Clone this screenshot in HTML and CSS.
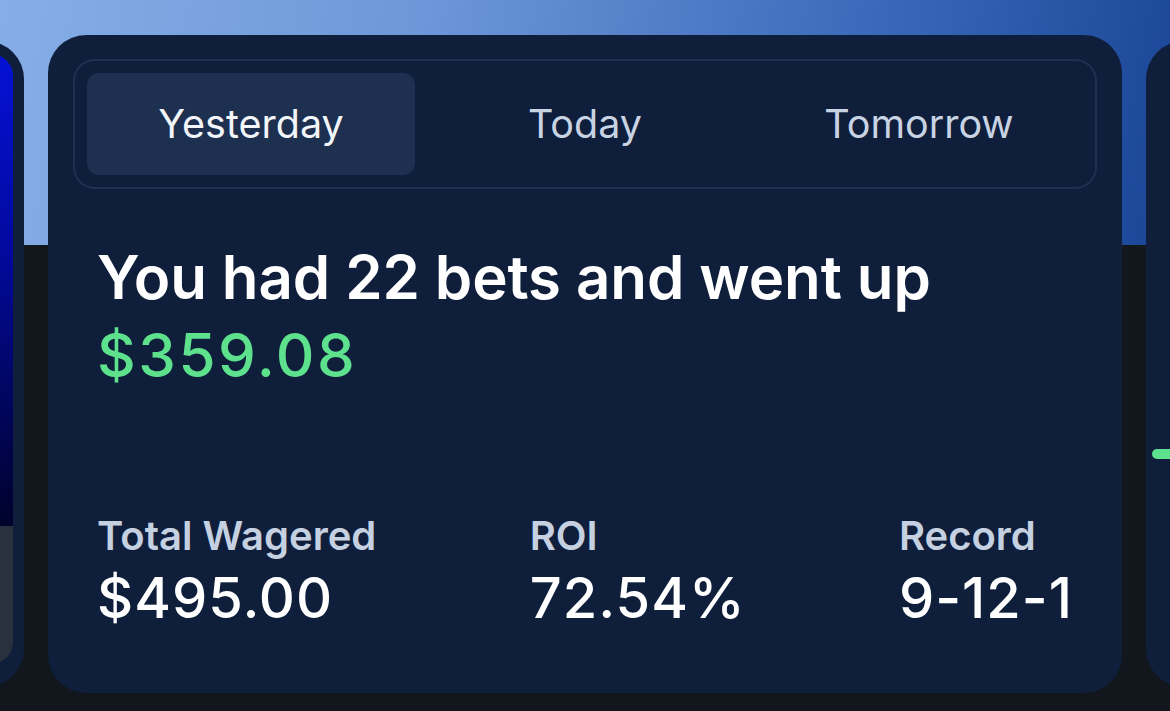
FILE: index.html
```html
<!DOCTYPE html>
<html lang="en">
<head>
  <meta charset="UTF-8">
  <meta name="viewport" content="width=device-width, initial-scale=1.0">
  <title>Daily Recap</title>
  <link rel="stylesheet" href="styles.css">
</head>
<body>
  <div class="carousel">
    <div class="card side-card">
      <div class="preview">
        <div class="preview-art"></div>
        <div class="preview-footer"></div>
      </div>
    </div>

    <div class="card recap-card">
      <div class="tabs">
        <button class="tab active">Yesterday</button>
        <button class="tab">Today</button>
        <button class="tab">Tomorrow</button>
      </div>

      <div class="summary">
        <h1 class="headline">You had 22 bets and went up <span class="profit">$359.08</span></h1>

        <div class="stats">
          <div class="stat">
            <div class="stat-label">Total Wagered</div>
            <div class="stat-value">$495.00</div>
          </div>
          <div class="stat">
            <div class="stat-label">ROI</div>
            <div class="stat-value">72.54%</div>
          </div>
          <div class="stat">
            <div class="stat-label">Record</div>
            <div class="stat-value">9-12-1</div>
          </div>
        </div>
      </div>
    </div>

    <div class="card side-card">
      <div class="chart-line"></div>
    </div>
  </div>
</body>
</html>
```

FILE: styles.css
```css
body {
  font-family: Inter, "Noto Sans", sans-serif;
  margin: 0;
  padding: 0;
  height: 711px;
  overflow: hidden;
  background:
    linear-gradient(100deg, #86aee6 0%, #6d97d8 35%, #3e6cbc 70%, #1a4596 100%) top / 100% 245px no-repeat,
    #12161d;
  color: #fff;
}

.carousel {
  display: flex;
  justify-content: center;
  align-items: center;
  gap: 24px;
  padding-top: 35px;
  height: 658px;
}

.card {
  flex-shrink: 0;
  width: 1074px;
  background-color: #0f1f3b;
  border-radius: 38px;
  box-sizing: border-box;
}

.side-card {
  height: 646px;
  display: flex;
  flex-direction: column;
}

/* left neighbour: only its right edge shows */
.preview {
  flex: 1;
  margin: 13px 11px 23px 13px;
  border-radius: 22px;
  overflow: hidden;
  display: flex;
  flex-direction: column;
}

.preview-art {
  flex: 1;
  background: linear-gradient(180deg, #0512d6 0%, #0209a0 40%, #00022a 100%);
}

.preview-footer {
  height: 138px;
  background-color: #29313e;
}

/* right neighbour: start of a chart line */
.chart-line {
  margin: 408px 0 0 6px;
  width: 200px;
  height: 10px;
  border-radius: 5px;
  background-color: #5ee18c;
}

.recap-card {
  height: 658px;
  padding: 24px 25px 0;
  display: flex;
  flex-direction: column;
}

.tabs {
  display: flex;
  gap: 6px;
  padding: 12px;
  border: 2px solid #1f3050;
  border-radius: 22px;
}

.tab {
  flex: 1;
  height: 102px;
  border: none;
  border-radius: 12px;
  background: transparent;
  color: #c8d3e3;
  font-family: inherit;
  font-size: 39.5px;
  font-weight: 400;
  padding: 0;
  cursor: pointer;
}

.tab.active {
  background-color: #1e3050;
  color: #f2f5f9;
}

.summary {
  flex: 1;
  display: flex;
  flex-direction: column;
  padding: 49px 24px 63px;
}

.headline {
  margin: 0;
  font-size: 60px;
  font-weight: 600;
  line-height: 78px;
  letter-spacing: -0.1px;
  max-width: 940px;
}

.profit {
  color: #5ee18c;
  font-weight: 500;
  letter-spacing: 2.5px;
}

.stats {
  margin-top: auto;
  display: flex;
  justify-content: space-between;
}

.stat-label {
  font-size: 40px;
  font-weight: 600;
  line-height: 48px;
  color: #c5d0e0;
  margin-bottom: 6px;
}

.stat-value {
  font-size: 56px;
  font-weight: 500;
  line-height: 64px;
  letter-spacing: 1px;
}
```
